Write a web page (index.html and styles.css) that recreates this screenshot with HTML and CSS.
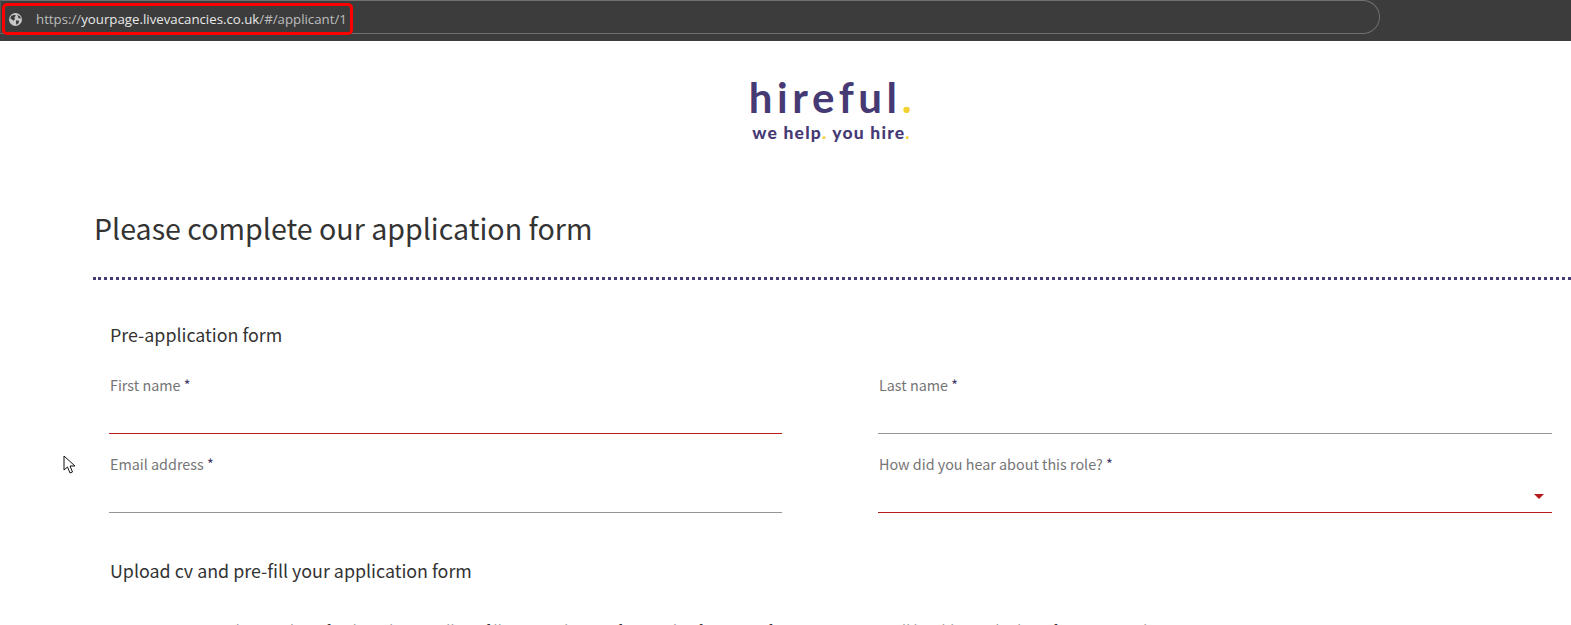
FILE: index.html
```html
<!DOCTYPE html>
<html lang="en">
<head>
<meta charset="utf-8">
<title>Application form</title>
<link rel="stylesheet" href="styles.css">
</head>
<body>
<header class="browser-bar">
  <div class="url-pill">
    <div class="url-highlight">
      <svg class="globe" viewBox="0 0 16 16" width="13" height="13" aria-hidden="true"><circle cx="8" cy="8" r="8" fill="#c8c8c8"/><path d="M3 3.5 L7 2 L8.5 3.5 L6.5 5.5 L7.5 7.5 L5.5 9.5 L3.5 8 L1.5 6.5 Z M9 9 L12.5 9.5 L11.5 13 L9.5 14.5 L8.5 12 Z M10.5 2 L14 4.5 L14.5 7 L11.5 6 Z" fill="#3c3c3c"/></svg>
      <span class="url-text">https://<span class="url-strong">yourpage.livevacancies.co.uk</span>/#/applicant/1</span>
    </div>
  </div>
</header>

<main class="page">
  <div class="logo">
    <div class="logo-name">hireful<span class="logo-dot">.</span></div>
    <div class="logo-tag">we help<span class="logo-dot">.</span> you hire<span class="logo-dot">.</span></div>
  </div>

  <section class="content">
    <h1 class="title">Please complete our application form</h1>
    <form class="form">
      <h2 class="section-title">Pre-application form</h2>
      <div class="fields">
        <div class="field field-error"><span class="label">First name <span class="star">*</span></span></div>
        <div class="field"><span class="label">Last name <span class="star">*</span></span></div>
        <div class="field"><span class="label">Email address <span class="star">*</span></span></div>
        <div class="field field-error"><span class="label">How did you hear about this role? <span class="star">*</span></span><span class="caret"></span></div>
      </div>
      <h2 class="section-title upload-title">Upload cv and pre-fill your application form</h2>
      <p class="intro">To save you time when applying for this role, we will pre-fill your application form with information from your CV. You will be able to edit this information in the</p>
    </form>
  </section>
</main>

<svg class="cursor" viewBox="0 0 13 20" width="13" height="20" aria-hidden="true"><path d="M1 1 L1 15 L4.5 12 L7 18 L9.5 17 L7 11 L12 11 Z" fill="#fff" stroke="#111" stroke-width="1"/></svg>
</body>
</html>
```
FILE: styles.css
```css
* { box-sizing: border-box; }
html, body { margin: 0; padding: 0; height: 625px; overflow: hidden; background: #fff; }
body { font-family: "Noto Sans CJK SC", "Noto Sans", sans-serif; color: #333; position: relative; }

.browser-bar { height: 41px; background: #3c3c3c; padding-right: 191px; }
.url-pill { height: 34px; border: 1px solid #707070; border-left-color: #555; border-radius: 0 17px 17px 0; display: flex; align-items: flex-start; }
.url-highlight { margin: 2px 0 0 1px; width: 351px; height: 32px; border: 3px solid #f00; border-radius: 5px; display: flex; align-items: center; padding-left: 4px; gap: 14px; }
.globe { flex: none; }
.url-text { font-family: "Open Sans", sans-serif; font-size: 13.25px; line-height: 20px; color: #bdbdbd; white-space: nowrap; }
.url-strong { color: #e8e8e8; }

.logo { height: 124px; padding: 33px 0 0 92px; display: flex; flex-direction: column; align-items: center; color: #463a75; font-family: "Lato", sans-serif; font-weight: 700; }
.logo-name { font-size: 42px; line-height: 46px; letter-spacing: 4.6px; margin-left: 2px; }
.logo-tag { font-size: 17.5px; line-height: 20px; margin-top: 3px; letter-spacing: 1.2px; font-weight: 900; }
.logo-dot { color: #f3d02f; }

.content { padding-left: 93px; }
.title { margin: 0; font-size: 28.6px; font-weight: 400; line-height: 46px; height: 115px; padding: 40px 0 0 1px; color: #333; border-bottom: 3px dotted #463a75; }
.form { padding: 0 19px 0 16px; }
.section-title { margin: 0; padding-left: 1px; font-size: 17.85px; font-weight: 400; line-height: 26px; color: #333; }
.form > .section-title:first-child { margin-top: 41px; }
.fields { display: grid; grid-template-columns: 673px 674px; column-gap: 96px; margin-top: 27px; }
.field { height: 79px; position: relative; }
.field::after { content: ""; position: absolute; left: 0; right: 0; top: 59px; height: 1px; background: #949494; }
.field-error::after { background: #b71c1c; }
.label { display: block; padding-left: 1px; font-size: 14.35px; line-height: 22px; color: #757575; }
.star { color: #3f3a66; }
.caret { position: absolute; right: 8px; top: 41px; width: 0; height: 0; border-left: 5px solid transparent; border-right: 5px solid transparent; border-top: 5px solid #b71c1c; }
.upload-title { margin-top: 25px; }
.intro { margin: 36px 0 0; padding-left: 1px; font-size: 14.3px; line-height: 22px; color: #333; white-space: nowrap; }

.cursor { position: absolute; left: 63px; top: 455px; }
```
